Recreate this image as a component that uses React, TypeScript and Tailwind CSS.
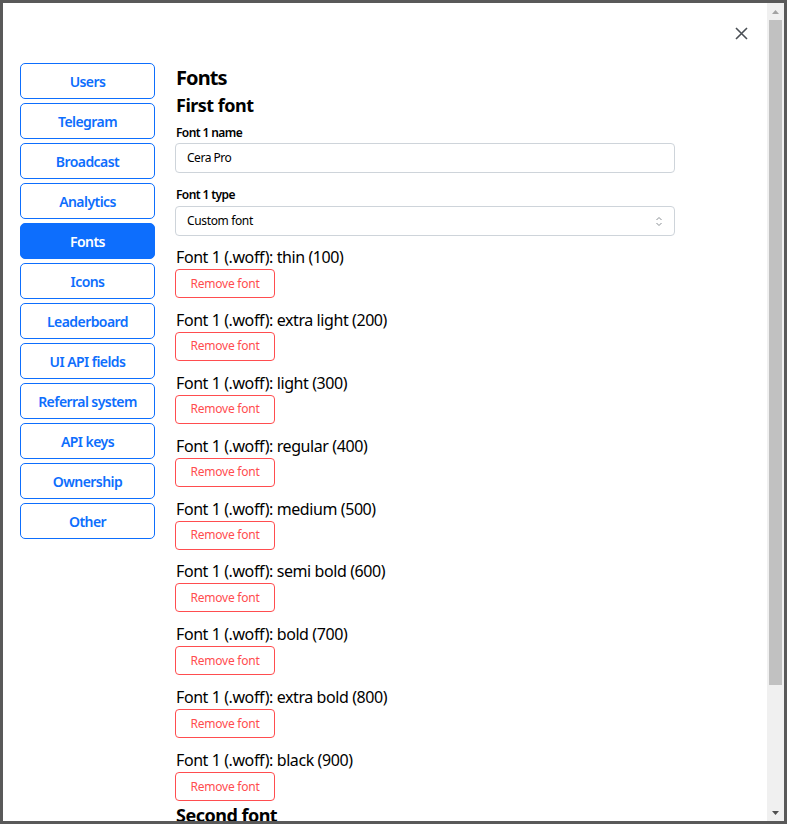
import React from "react";

const navItems = [
  "Users",
  "Telegram",
  "Broadcast",
  "Analytics",
  "Fonts",
  "Icons",
  "Leaderboard",
  "UI API fields",
  "Referral system",
  "API keys",
  "Ownership",
  "Other",
];

const weights = [
  "thin (100)",
  "extra light (200)",
  "light (300)",
  "regular (400)",
  "medium (500)",
  "semi bold (600)",
  "bold (700)",
  "extra bold (800)",
  "black (900)",
];

export default function App() {
  return (
    <div
      className="h-[824px] w-[787px] overflow-hidden bg-[#595959] p-[3px] text-black"
      style={{ fontFamily: '"Noto Sans", sans-serif' }}
    >
      <div className="flex h-full w-full bg-white">
        <div className="relative flex-1 overflow-hidden">
          <button className="absolute left-[730px] top-[22px] flex h-[17px] w-[17px] items-center justify-center">
            <svg width="13" height="13" viewBox="0 0 13 13" fill="none">
              <path d="M1 1L12 12M12 1L1 12" stroke="#4a4f55" strokeWidth="1.6" />
            </svg>
          </button>
          <div className="flex gap-[20px] pl-[17px] pt-[60px]">
            <div className="flex w-[135px] shrink-0 flex-col gap-[4px]">
              {navItems.map((n) => (
                <div
                  key={n}
                  className={
                    n === "Fonts"
                      ? "flex h-[36px] items-center justify-center rounded-[5px] border border-[#0d6efd] bg-[#0d6efd] text-[14px] font-semibold tracking-[-0.04em] text-white"
                      : "flex h-[36px] items-center justify-center rounded-[5px] border border-[#0d6efd] bg-white text-[14px] font-semibold tracking-[-0.04em] text-[#0d6efd]"
                  }
                >
                  {n}
                </div>
              ))}
            </div>
            <div className="flex w-[500px] flex-col">
              <div className="pl-[1px] text-[20px] font-bold leading-[30px] tracking-[-0.045em]">Fonts</div>
              <div className="pl-[1px] text-[18px] font-bold leading-[25px] tracking-[-0.028em]">First font</div>
              <div className="mt-[6px] pl-[1px] text-[12px] font-semibold leading-[18px] tracking-[-0.05em]">Font 1 name</div>
              <div className="mt-[1px] flex h-[30px] items-center rounded-[4px] border border-[#ced4da] px-[11px] text-[12px] tracking-[-0.04em]">
                Cera Pro
              </div>
              <div className="mt-[13px] pl-[1px] text-[12px] font-semibold leading-[18px] tracking-[-0.05em]">Font 1 type</div>
              <div className="mt-[2px] flex h-[30px] items-center justify-between rounded-[4px] border border-[#ced4da] pl-[11px] pr-[11px] text-[12px] tracking-[-0.03em]">
                <span>Custom font</span>
                <svg width="8" height="11" viewBox="0 0 8 11" fill="none">
                  <path d="M1.5 4L4 1.5L6.5 4M1.5 7L4 9.5L6.5 7" stroke="#8a8f94" strokeWidth="1" />
                </svg>
              </div>
              <div className="mt-[9px] flex flex-col">
                {weights.map((w, i) => (
                  <div key={w} className={i === 0 ? "flex flex-col" : "mt-[9.875px] flex flex-col"}>
                    <div className="pl-[1px] text-[16px] leading-[24px] tracking-[-0.026em]">Font 1 (.woff): {w}</div>
                    <div className="flex h-[29px] w-[100px] items-center justify-center rounded-[4px] border border-[#ff4d4f] text-[12px] tracking-[-0.02em] text-[#ff4d4f]">
                      Remove font
                    </div>
                  </div>
                ))}
              </div>
              <div className="pl-[1px] pt-[2px] text-[18px] font-bold leading-[25px] tracking-[-0.028em]">Second font</div>
            </div>
          </div>
        </div>
        <div className="flex w-[17px] shrink-0 flex-col bg-[#f0f0f0]">
          <div className="flex h-[17px] items-center justify-center">
            <svg width="7" height="4" viewBox="0 0 7 4">
              <path d="M0 4L3.5 0L7 4Z" fill="#a3a3a3" />
            </svg>
          </div>
          <div className="ml-[2px] h-[665px] w-[13px] bg-[#c1c1c1]" />
          <div className="flex-1" />
          <div className="flex h-[17px] items-center justify-center">
            <svg width="7" height="4" viewBox="0 0 7 4">
              <path d="M0 0L7 0L3.5 4Z" fill="#505050" />
            </svg>
          </div>
        </div>
      </div>
    </div>
  );
}
